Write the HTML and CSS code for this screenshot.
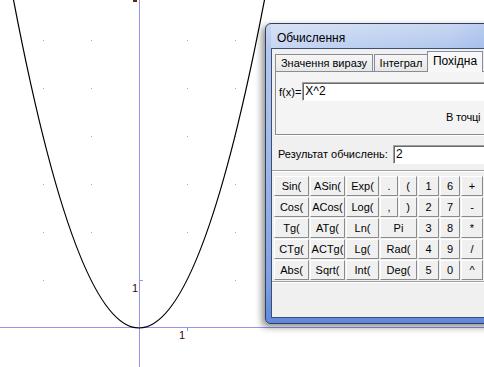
FILE: index.html
```html
<!DOCTYPE html>
<html lang="uk">
<head>
    <meta charset="UTF-8">
    <title>Обчислення</title>
    <link rel="stylesheet" href="styles.css">
</head>
<body>
    <svg class="graph" width="484" height="367" viewBox="0 0 484 367">
        <!-- grid dots, 48px per unit, origin at 139,328 -->
        <g class="dots">
            <rect x="43" y="40" width="1" height="1"/><rect x="91" y="40" width="1" height="1"/><rect x="187" y="40" width="1" height="1"/><rect x="235" y="40" width="1" height="1"/>
            <rect x="43" y="88" width="1" height="1"/><rect x="91" y="88" width="1" height="1"/><rect x="187" y="88" width="1" height="1"/><rect x="235" y="88" width="1" height="1"/>
            <rect x="43" y="136" width="1" height="1"/><rect x="91" y="136" width="1" height="1"/><rect x="187" y="136" width="1" height="1"/><rect x="235" y="136" width="1" height="1"/>
            <rect x="43" y="184" width="1" height="1"/><rect x="91" y="184" width="1" height="1"/><rect x="187" y="184" width="1" height="1"/><rect x="235" y="184" width="1" height="1"/>
            <rect x="43" y="232" width="1" height="1"/><rect x="91" y="232" width="1" height="1"/><rect x="187" y="232" width="1" height="1"/><rect x="235" y="232" width="1" height="1"/>
            <rect x="43" y="280" width="1" height="1"/><rect x="91" y="280" width="1" height="1"/><rect x="235" y="280" width="1" height="1"/>
        </g>
        <g class="axes">
            <line x1="139.5" y1="0" x2="139.5" y2="367"/>
            <line x1="0" y1="327.5" x2="484" y2="327.5"/>
            <line x1="187.5" y1="328" x2="187.5" y2="331"/>
            <line x1="140" y1="280.5" x2="143" y2="280.5"/>
        </g>
        <rect class="mark" x="133" y="0" width="4" height="2"/>
        <text class="label" x="132" y="292">1</text>
        <text class="label" x="179" y="339">1</text>
        <!-- y = x^2 as one quadratic bezier -->
        <path class="curve" d="M9,-24.1 Q139,680.1 269,-24.1"/>
    </svg>

    <div class="window">
        <div class="title">Обчислення</div>
        <div class="client">
            <div class="tabs">
                <div class="tab tab-wide">Значення виразу</div>
                <div class="tab tab-mid">Інтеграл</div>
                <div class="tab tab-active">Похідна</div>
            </div>
            <div class="tab-panel">
                <div class="func-row">
                    <span>f(x)=</span>
                    <div class="edit edit-func">X^2</div>
                </div>
                <div class="point-row">В точці</div>
            </div>
            <div class="result-row">
                <span>Результат обчислень:</span>
                <div class="edit edit-result">2</div>
            </div>
            <div class="keys">
                <div class="key">Sin(</div><div class="key">ASin(</div><div class="key">Exp(</div><div class="key">.</div><div class="key">(</div><div class="key">1</div><div class="key">6</div><div class="key">+</div>
                <div class="key">Cos(</div><div class="key">ACos(</div><div class="key">Log(</div><div class="key">,</div><div class="key">)</div><div class="key">2</div><div class="key">7</div><div class="key">-</div>
                <div class="key">Tg(</div><div class="key">ATg(</div><div class="key">Ln(</div><div class="key span2">Pi</div><div class="key">3</div><div class="key">8</div><div class="key">*</div>
                <div class="key">CTg(</div><div class="key">ACTg(</div><div class="key">Lg(</div><div class="key span2">Rad(</div><div class="key">4</div><div class="key">9</div><div class="key">/</div>
                <div class="key">Abs(</div><div class="key">Sqrt(</div><div class="key">Int(</div><div class="key span2">Deg(</div><div class="key">5</div><div class="key">0</div><div class="key">^</div>
            </div>
        </div>
    </div>
</body>
</html>
```

FILE: styles.css
```css
html, body {
    margin: 0;
    width: 484px;
    height: 367px;
    overflow: hidden;
    background: #fff;
    font-family: "Liberation Sans", Arial, sans-serif;
    font-size: 11px;
    color: #000;
}
.graph {
    display: block;
}
.dots rect {
    fill: #9fb2dc;
}
.axes line {
    stroke: #9494ec;
    stroke-width: 1;
}
.mark {
    fill: #5a2a10;
}
.label {
    font-family: "Liberation Sans", Arial, sans-serif;
    font-size: 11px;
    fill: #3a0a0a;
}
.curve {
    fill: none;
    stroke: #000;
    stroke-width: 1.2;
}

/* window on top of the graph */
.window {
    position: absolute;
    left: 265px;
    top: 23px;
    width: 262px;
    height: 301px;
    box-sizing: border-box;
    border: 1px solid #33405c;
    border-radius: 6px 6px 0 5px;
    padding: 0 5px 5px 5px;
    background: linear-gradient(to bottom, #c9d8f1 0, #b3c8ef 24px, #a3bbe9 120px, #7d9fe3 260px, #5f88dd 100%);
    box-shadow: -3px 3px 7px rgba(0, 0, 0, 0.45);
}
.title {
    height: 24px;
    line-height: 28px;
    padding-left: 6px;
    font-size: 12px;
    background: linear-gradient(to right, rgba(255,255,255,0.25), rgba(255,255,255,0) 70%, rgba(90,130,220,0.25));
}
.client {
    height: 270px;
    box-sizing: border-box;
    border: 1px solid #3d4f70;
    background: #f0f0f0;
    display: flex;
    flex-direction: column;
}

.tabs {
    display: flex;
    align-items: flex-end;
    height: 20px;
    margin-top: 2px;
    padding-left: 3px;
}
.tab {
    box-sizing: border-box;
    height: 17px;
    line-height: 16px;
    text-align: center;
    border: 1px solid #898c95;
    border-bottom: none;
    background: linear-gradient(to bottom, #f6f6f6, #e7e7e7);
}
.tab-wide {
    width: 98px;
}
.tab-mid {
    width: 54px;
    margin-left: 1px;
}
.tab-active {
    width: 56px;
    height: 21px;
    margin-left: -1px;
    margin-bottom: -1px;
    line-height: 19px;
    position: relative;
    z-index: 1;
    background: #f7f7f7;
    font-size: 12px;
}
.tab-panel {
    margin-left: 3px;
    height: 64px;
    box-sizing: border-box;
    border: 1px solid #898c95;
    border-right: none;
    background: #f4f4f4;
    box-shadow: 0 1px 0 #fff;
}
.func-row {
    display: flex;
    align-items: center;
    gap: 1px;
    margin-top: 10px;
    padding-left: 3px;
}
.edit {
    box-sizing: border-box;
    height: 19px;
    line-height: 17px;
    padding-left: 2px;
    background: #fff;
    border: 1px solid;
    border-color: #a0a0a0 #fff #fff #a0a0a0;
    box-shadow: inset 1px 1px 0 #696969;
    font-size: 12px;
}
.edit-func {
    flex: 1;
}
.point-row {
    padding-left: 170px;
    margin-top: 10px;
    font-size: 11px;
    letter-spacing: -0.2px;
}
.result-row {
    display: flex;
    align-items: center;
    gap: 5px;
    height: 35px;
    padding-left: 6px;
    padding-top: 3px;
    box-sizing: border-box;
    font-size: 11px;
}
.edit-result {
    flex: 1;
}

.keys {
    display: grid;
    grid-template-columns: 35px 35px 33px 18px 18px 21px 20px 22px;
    grid-auto-rows: 20px;
    gap: 1px;
    padding: 5px 0 1px 2px;
    border-top: 1px solid #a0a0a0;
    border-bottom: 1px solid #a0a0a0;
    box-shadow: inset 0 1px 0 #fff, 0 1px 0 #fff;
}
.key {
    box-sizing: border-box;
    border: 1px solid;
    border-color: #fff #8a8a8a #8a8a8a #fff;
    background: #f0f0f0;
    text-align: center;
    line-height: 18px;
    font-size: 11px;
}
.span2 {
    grid-column: span 2;
}
```
